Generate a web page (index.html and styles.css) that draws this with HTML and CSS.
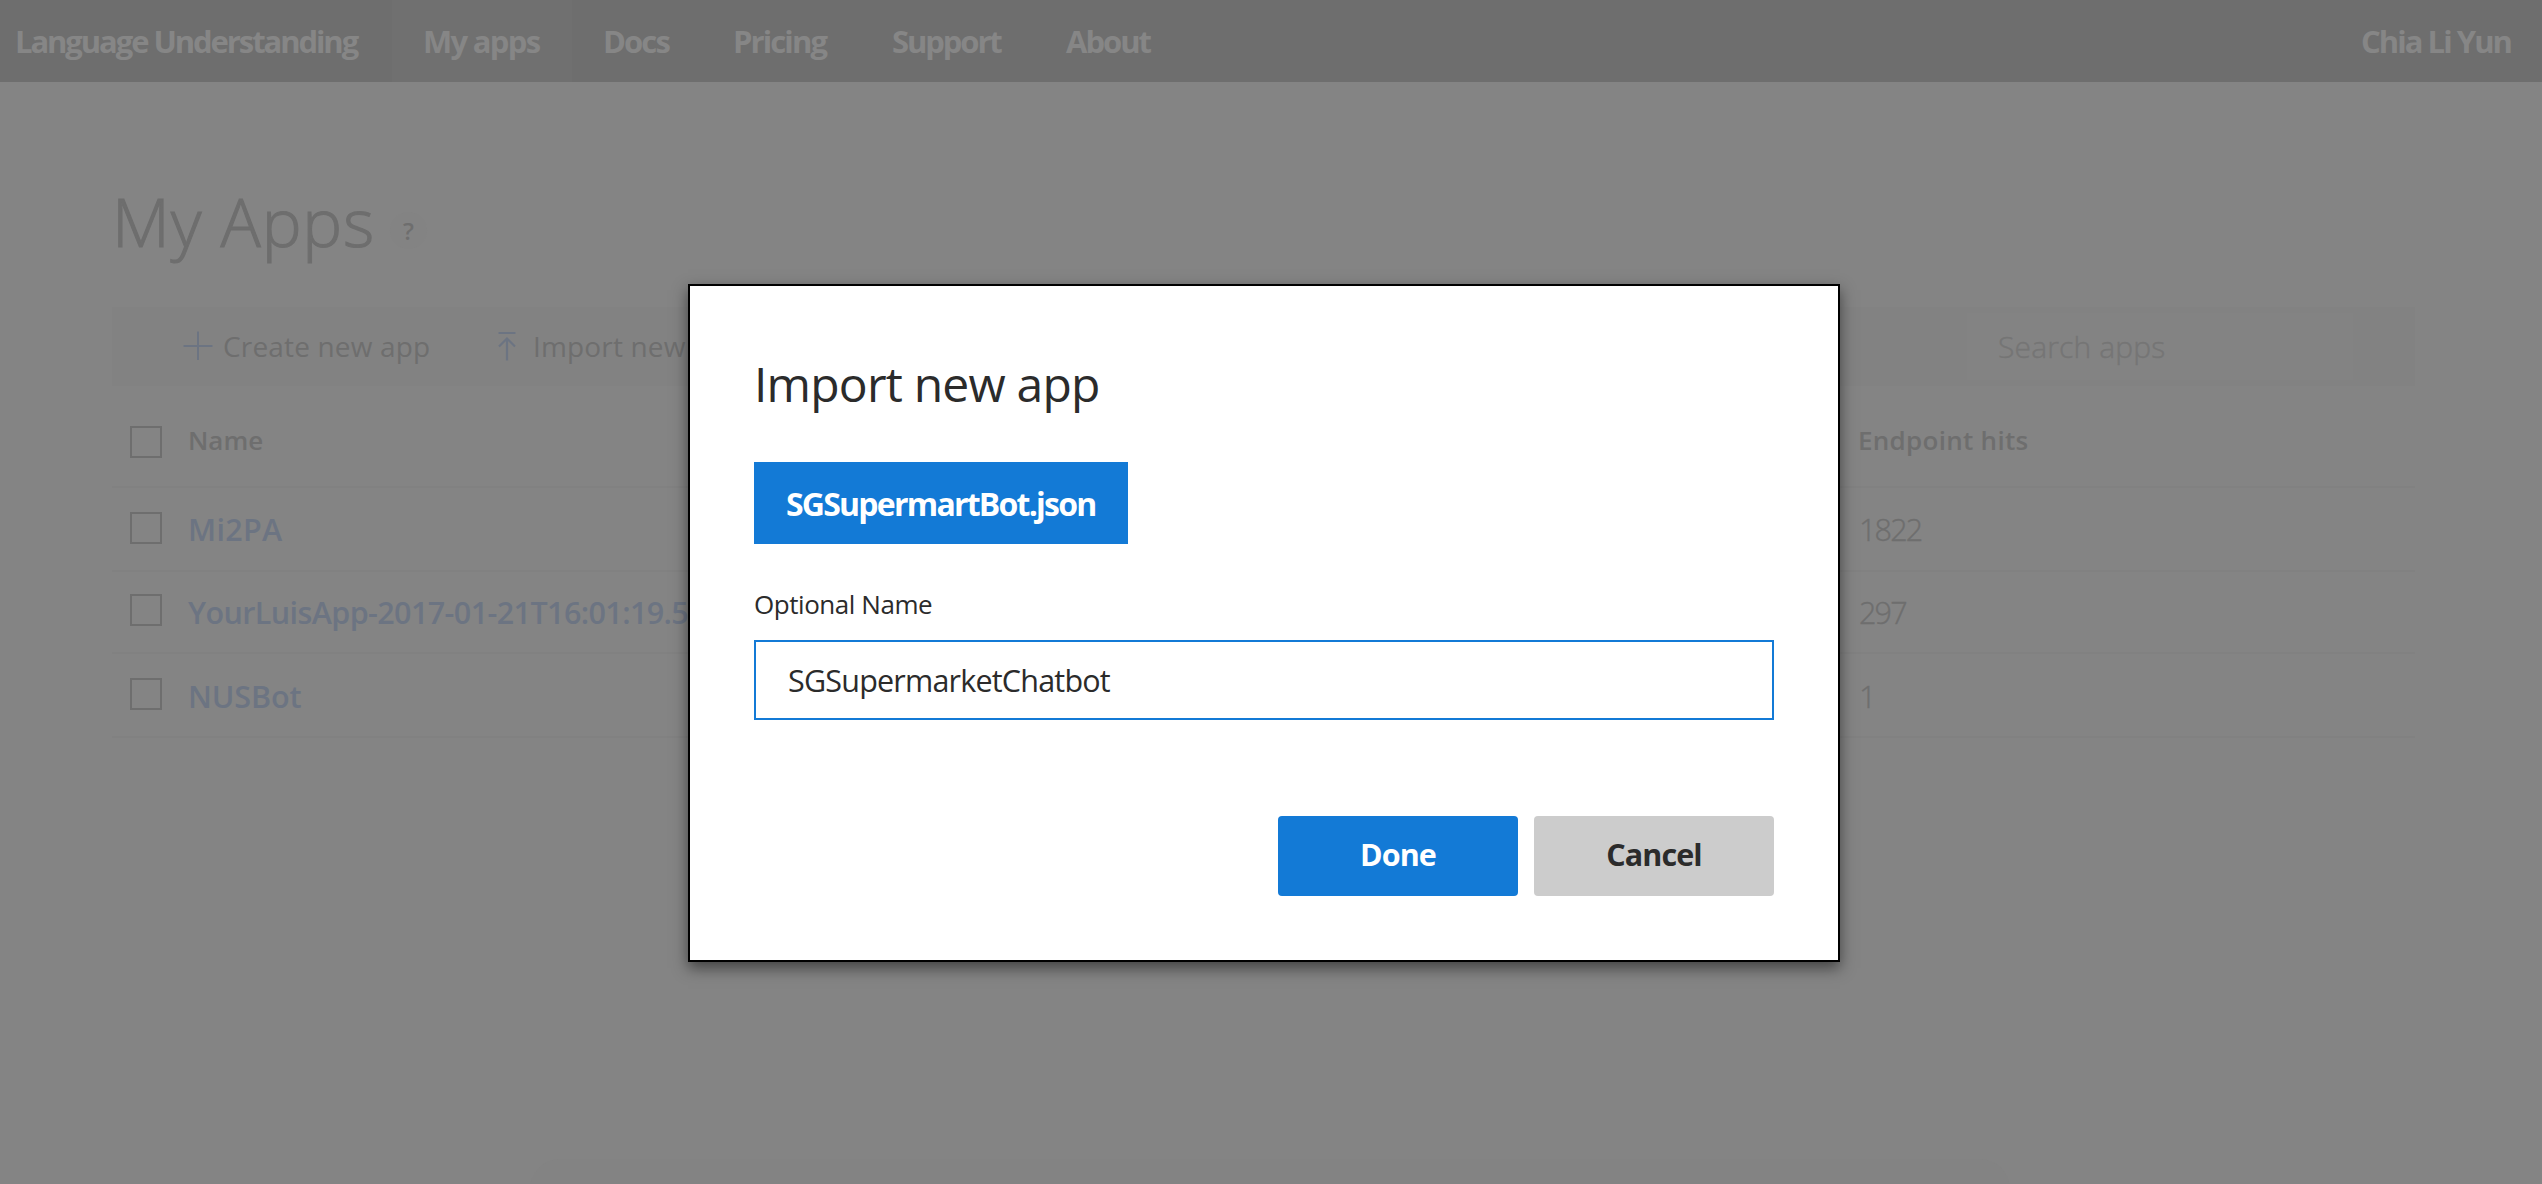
FILE: index.html
```
<!DOCTYPE html>
<html lang="en">
<head>
<meta charset="utf-8">
<title>Language Understanding - My apps</title>
<link rel="stylesheet" href="styles.css">
</head>
<body>
<header class="navbar">
  <span class="brand">Language Understanding</span>
  <nav class="links">
    <a class="link active">My apps</a>
    <a class="link docs">Docs</a>
    <a class="link pricing">Pricing</a>
    <a class="link support">Support</a>
    <a class="link about">About</a>
  </nav>
  <span class="user">Chia Li Yun</span>
</header>
<main class="page">
  <div class="heading">
    <h1 class="title">My Apps</h1>
    <span class="help">?</span>
  </div>
  <div class="toolbar">
    <div class="action create">
      <svg class="icon-plus" width="30" height="30" viewBox="0 0 30 30"><path d="M15 0.5V29M0.5 15H29.5" fill="none" stroke="currentColor" stroke-width="2"/></svg>
      <span>Create new app</span>
    </div>
    <div class="action import">
      <svg class="icon-import" width="18" height="30" viewBox="0 0 18 30"><path d="M0.5 2H17.5M9 29.5V8M1 15.5L9 7.5L17 15.5" fill="none" stroke="currentColor" stroke-width="2.2"/></svg>
      <span class="import-label">Import new</span>
    </div>
    <div class="search">Search apps</div>
  </div>
  <div class="table">
    <div class="row head">
      <span class="box"></span><span class="th">Name</span><span class="th hits-head">Endpoint hits</span>
    </div>
    <div class="row first">
      <span class="box"></span><a class="name">Mi2PA</a><span class="hits">1822</span>
    </div>
    <div class="row second">
      <span class="box"></span><a class="name long">YourLuisApp-2017-01-21T16:01:19.5</a><span class="hits">297</span>
    </div>
    <div class="row third">
      <span class="box"></span><a class="name bot">NUSBot</a><span class="hits">1</span>
    </div>
  </div>
</main>
<div class="page-shade"></div>
<section class="dialog">
  <h2 class="dialog-title">Import new app</h2>
  <div class="file">SGSupermartBot.json</div>
  <div class="label">Optional Name</div>
  <div class="field">SGSupermarketChatbot</div>
  <div class="buttons">
    <div class="button done">Done</div>
    <div class="button cancel">Cancel</div>
  </div>
</section>
</body>
</html>
```
FILE: styles.css
```
* { box-sizing: border-box; }
body {
  margin: 0;
  height: 1184px;
  position: relative;
  overflow: hidden;
  background: #848484;
  color: #6e6e6e;
  font-family: "Open Sans", "Noto Sans", sans-serif;
  white-space: nowrap;
}
.navbar {
  display: flex;
  height: 82px;
  background: #6e6e6e;
  color: #868686;
  font-size: 31px;
  font-weight: 700;
  line-height: 82px;
  letter-spacing: -1.9px;
}
.brand { width: 392px; padding-left: 15px; letter-spacing: -2.08px; }
.links { display: flex; flex: 1; }
.link { padding-left: 31px; }
.active { width: 180px; background: #707070; letter-spacing: -1.7px; }
.docs { width: 130px; }
.pricing { width: 159px; }
.support { width: 173px; letter-spacing: -2.1px; }
.about { padding-left: 32px; letter-spacing: -2px; }
.user { width: 181px; letter-spacing: -1.95px; }

.page { padding: 98px 127px 0 112px; }
.heading { display: flex; height: 80px; margin-bottom: 47px; }
.title {
  margin: 0;
  width: 278px;
  font-size: 67px;
  font-weight: 300;
  line-height: 82px;
  letter-spacing: 0.85px;
  -webkit-text-stroke: 1.1px currentColor;
}
.help {
  width: 37px;
  height: 37px;
  margin-top: 32px;
  border-radius: 50%;
  background: #838383;
  font-size: 24px;
  font-weight: 600;
  line-height: 37px;
  text-align: center;
}
.toolbar {
  display: flex;
  height: 79px;
  background: #828282;
  font-size: 28px;
  letter-spacing: 0.16px;
}
.action { display: flex; flex-shrink: 0; align-items: center; height: 77px; }
.create { width: 386px; padding-left: 71px; gap: 10px; }
.import { width: 1469px; gap: 17px; }
.icon-plus, .icon-import { color: #6c7482; }
.search {
  flex-shrink: 0;
  width: 386px;
  height: 67px;
  margin-top: 6px;
  padding-left: 31px;
  background: #838383;
  color: #757575;
  font-size: 30px;
  font-weight: 300;
  line-height: 67px;
  -webkit-text-stroke: 0.4px currentColor;
}
.row {
  display: grid;
  grid-template-columns: 32px 1644px 1fr;
  column-gap: 26px;
  align-items: center;
  padding-left: 18px;
  border-bottom: 2px solid #818181;
}
.head { height: 102px; padding-top: 12px; }
.first { height: 84px; }
.second { height: 82px; }
.third { height: 84px; padding-top: 2px; }
.box { width: 32px; height: 32px; margin-bottom: 3px; border: 2px solid #6e6e6e; }
.second .box, .third .box { margin-bottom: 4px; }
.head .box { margin: 0; }
.th { padding-bottom: 4px; font-size: 26px; font-weight: 600; }
.hits-head { letter-spacing: 0.28px; }
.name { color: #6c7482; font-size: 30.5px; font-weight: 600; }
.first .name { padding-bottom: 1px; letter-spacing: 0.3px; }
.long { letter-spacing: -0.6px; }
.bot { letter-spacing: -0.1px; }
.hits {
  padding-left: 1px;
  font-size: 30.5px;
  font-weight: 300;
  letter-spacing: -1.8px;
  -webkit-text-stroke: 0.4px currentColor;
}

.page-shade {
  position: absolute;
  left: 530px;
  top: 1159px;
  width: 1480px;
  height: 60px;
  border-radius: 50px;
  background: #838383;
}

.dialog {
  position: absolute;
  left: 688px;
  top: 284px;
  width: 1152px;
  height: 678px;
  padding: 66px 64px 0;
  border: 2px solid #000;
  background: #fff;
  box-shadow: 0 6px 14px rgba(0, 0, 0, 0.5);
  color: #2b2b2b;
}
.dialog-title {
  margin: 0 0 46px;
  font-size: 48px;
  font-weight: 400;
  line-height: 64px;
  letter-spacing: -0.8px;
}
.file {
  width: 374px;
  height: 82px;
  padding-left: 32px;
  background: #137ad6;
  color: #fff;
  font-size: 32px;
  font-weight: 700;
  line-height: 83px;
  letter-spacing: -1.77px;
}
.label {
  margin: 42px 0 18px;
  font-size: 26px;
  line-height: 36px;
  letter-spacing: -0.45px;
}
.field {
  height: 80px;
  padding-left: 32px;
  border: 2px solid #137ad6;
  font-size: 30.5px;
  line-height: 76px;
  letter-spacing: -0.8px;
}
.buttons { display: flex; justify-content: flex-end; gap: 16px; margin-top: 96px; }
.button {
  width: 240px;
  height: 80px;
  border-radius: 4px;
  font-size: 30.5px;
  font-weight: 700;
  line-height: 77px;
  letter-spacing: -0.9px;
  text-align: center;
}
.done { background: #137ad6; color: #fff; }
.cancel { background: #ccc; }
```
